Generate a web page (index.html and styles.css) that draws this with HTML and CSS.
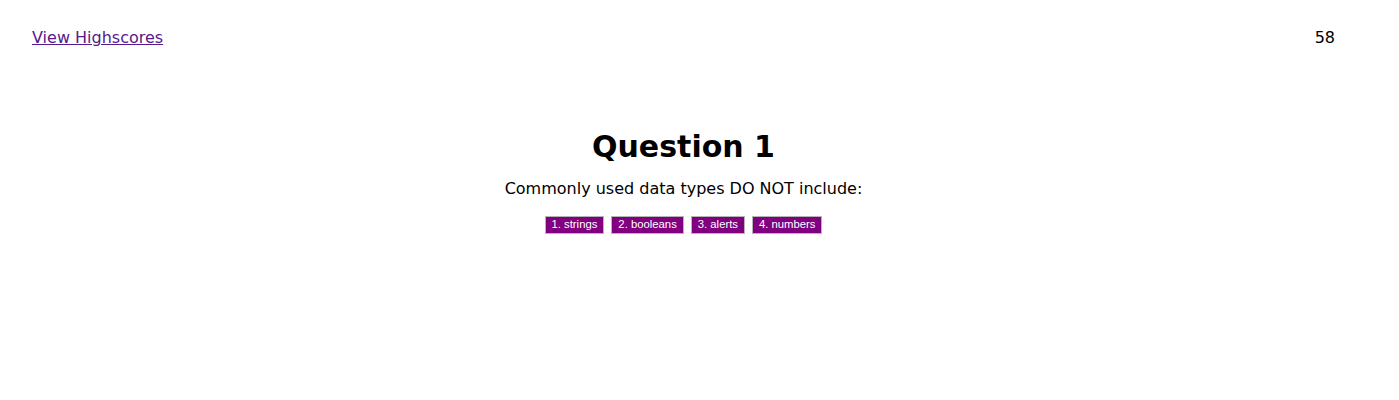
FILE: index.html
```html
<!DOCTYPE html>
<html>
<head>
<meta charset="utf-8">
<link rel="stylesheet" href="styles.css">
</head>
<body>
<div class="page">
  <header class="top">
    <a class="scores" href="#">View Highscores</a>
    <span class="timer">58</span>
  </header>
  <main class="quiz">
    <h1 class="title">Question 1</h1>
    <p class="prompt">Commonly used data types DO NOT include:</p>
    <div class="choices">
      <button class="choice">1. strings</button>
      <button class="choice">2. booleans</button>
      <button class="choice">3. alerts</button>
      <button class="choice">4. numbers</button>
    </div>
  </main>
</div>
</body>
</html>
```
FILE: styles.css
```css
html, body {
  margin: 0;
  padding: 0;
  background: #fff;
}
.page {
  width: 1367px;
  font-family: Verdana, "DejaVu Sans", sans-serif;
  color: #000;
}
.top {
  display: flex;
  justify-content: space-between;
  align-items: center;
  padding: 28px 32px 0 32px;
  font-size: 16px;
  line-height: 19px;
}
.scores {
  color: #551a8b;
  text-decoration: underline;
}
.quiz {
  display: flex;
  flex-direction: column;
  align-items: center;
  padding-top: 82px;
}
.title {
  margin: 0;
  font-size: 30px;
  line-height: 36px;
  font-weight: bold;
}
.prompt {
  margin: 14px 0 0 0;
  font-size: 16px;
  line-height: 19px;
}
.choices {
  display: flex;
  gap: 7px;
  margin-top: 18px;
}
.choice {
  font-family: "Liberation Sans", Arial, sans-serif;
  font-size: 11.3px;
  line-height: 13px;
  color: #fff;
  background: #800080;
  border: 1px solid #b5b5b5;
  padding: 1px 6px 2px;
  margin: 0;
  border-radius: 0;
}
```
